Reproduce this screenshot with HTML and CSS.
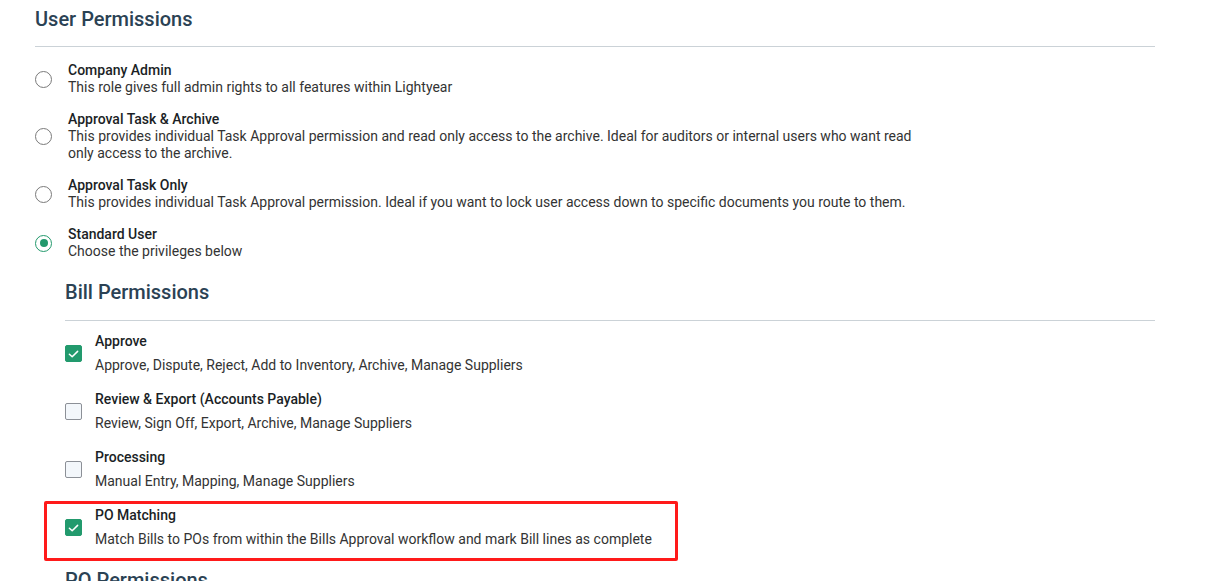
FILE: index.html
```html
<!DOCTYPE html>
<html lang="en">
<head>
    <meta charset="UTF-8">
    <meta name="viewport" content="width=device-width, initial-scale=1.0">
    <title>User Permissions</title>
    <link rel="stylesheet" href="styles.css">
</head>
<body>
    <div class="page">
        <h2 class="section-title">User Permissions</h2>

        <div class="roles">
            <div class="role">
                <span class="radio"></span>
                <div class="role-text">
                    <div class="role-name">Company Admin</div>
                    <div class="role-desc">This role gives full admin rights to all features within Lightyear</div>
                </div>
            </div>
            <div class="role">
                <span class="radio"></span>
                <div class="role-text">
                    <div class="role-name">Approval Task &amp; Archive</div>
                    <div class="role-desc">This provides individual Task Approval permission and read only access to the archive. Ideal for auditors or internal users who want read only access to the archive.</div>
                </div>
            </div>
            <div class="role">
                <span class="radio"></span>
                <div class="role-text">
                    <div class="role-name">Approval Task Only</div>
                    <div class="role-desc">This provides individual Task Approval permission. Ideal if you want to lock user access down to specific documents you route to them.</div>
                </div>
            </div>
            <div class="role">
                <span class="radio checked"></span>
                <div class="role-text">
                    <div class="role-name">Standard User</div>
                    <div class="role-desc">Choose the privileges below</div>
                </div>
            </div>
        </div>

        <div class="sub-section">
            <h2 class="section-title">Bill Permissions</h2>

            <div class="perms">
                <div class="perm">
                    <span class="checkbox checked">
                        <svg viewBox="0 0 16 16" width="16" height="16"><path d="M3.6 8.2 L6.6 11 L12.4 5.2" fill="none" stroke="#fff" stroke-width="1.6" stroke-linecap="round" stroke-linejoin="round"/></svg>
                    </span>
                    <div class="perm-text">
                        <div class="perm-name">Approve</div>
                        <div class="perm-desc">Approve, Dispute, Reject, Add to Inventory, Archive, Manage Suppliers</div>
                    </div>
                </div>
                <div class="perm">
                    <span class="checkbox"></span>
                    <div class="perm-text">
                        <div class="perm-name">Review &amp; Export (Accounts Payable)</div>
                        <div class="perm-desc">Review, Sign Off, Export, Archive, Manage Suppliers</div>
                    </div>
                </div>
                <div class="perm">
                    <span class="checkbox"></span>
                    <div class="perm-text">
                        <div class="perm-name">Processing</div>
                        <div class="perm-desc">Manual Entry, Mapping, Manage Suppliers</div>
                    </div>
                </div>
                <div class="perm highlighted">
                    <span class="checkbox checked">
                        <svg viewBox="0 0 16 16" width="16" height="16"><path d="M3.6 8.2 L6.6 11 L12.4 5.2" fill="none" stroke="#fff" stroke-width="1.6" stroke-linecap="round" stroke-linejoin="round"/></svg>
                    </span>
                    <div class="perm-text">
                        <div class="perm-name">PO Matching</div>
                        <div class="perm-desc">Match Bills to POs from within the Bills Approval workflow and mark Bill lines as complete</div>
                    </div>
                </div>
            </div>

            <h2 class="section-title next">PO Permissions</h2>
        </div>
    </div>
</body>
</html>
```

FILE: styles.css
```css
body {
    margin: 0;
    background: #fff;
    font-family: Roboto, "Liberation Sans", Arial, sans-serif;
    color: #222;
    overflow: hidden;
}

.page {
    margin: 0 63px 0 35px;
    padding-top: 7px;
}

.section-title {
    margin: 0;
    font-size: 20px;
    line-height: 24px;
    font-weight: 500;
    color: #2b4254;
    padding-bottom: 15px;
    border-bottom: 1px solid #cbd2d7;
}

/* roles (radios) */
.roles {
    display: flex;
    flex-direction: column;
    gap: 15px;
    padding-top: 15px;
}

.role {
    display: flex;
    align-items: center;
    gap: 16px;
}

.role-text {
    max-width: 850px;
    font-size: 14px;
    line-height: 17px;
}

.role-name {
    font-weight: 500;
    color: #1b1f26;
}

.role-desc {
    color: #333;
}

.radio {
    flex: none;
    width: 15px;
    height: 15px;
    border: 1.5px solid #7a7a7a;
    border-radius: 50%;
    position: relative;
}

.radio.checked {
    border-color: #22996c;
}

.radio.checked::after {
    content: "";
    position: absolute;
    top: 3.5px;
    left: 3.5px;
    width: 8px;
    height: 8px;
    border-radius: 50%;
    background: #22996c;
}

/* bill permissions */
.sub-section {
    margin-left: 30px;
    padding-top: 20px;
}

.sub-section .section-title {
    padding-bottom: 16px;
}

.perms {
    display: flex;
    flex-direction: column;
    gap: 17px;
    padding-top: 12px;
}

.perm {
    display: flex;
    align-items: center;
    gap: 13px;
    position: relative;
}

.perm-text {
    font-size: 14px;
    line-height: 17px;
}

.perm-name {
    font-weight: 500;
    color: #1b1f26;
}

.perm-desc {
    margin-top: 7px;
    color: #333;
}

.checkbox {
    flex: none;
    width: 15px;
    height: 15px;
    border: 1px solid #8c9097;
    border-radius: 2px;
    background: #f3f7fb;
    display: flex;
    align-items: center;
    justify-content: center;
}

.checkbox.checked {
    background: #229a6d;
    border-color: #229a6d;
}

/* red annotation box */
.highlighted::after {
    content: "";
    position: absolute;
    left: -21px;
    top: -6px;
    width: 628px;
    height: 54px;
    border: 3px solid #ff1a1a;
    border-radius: 2px;
}

.section-title.next {
    margin-top: 20px;
}
```
